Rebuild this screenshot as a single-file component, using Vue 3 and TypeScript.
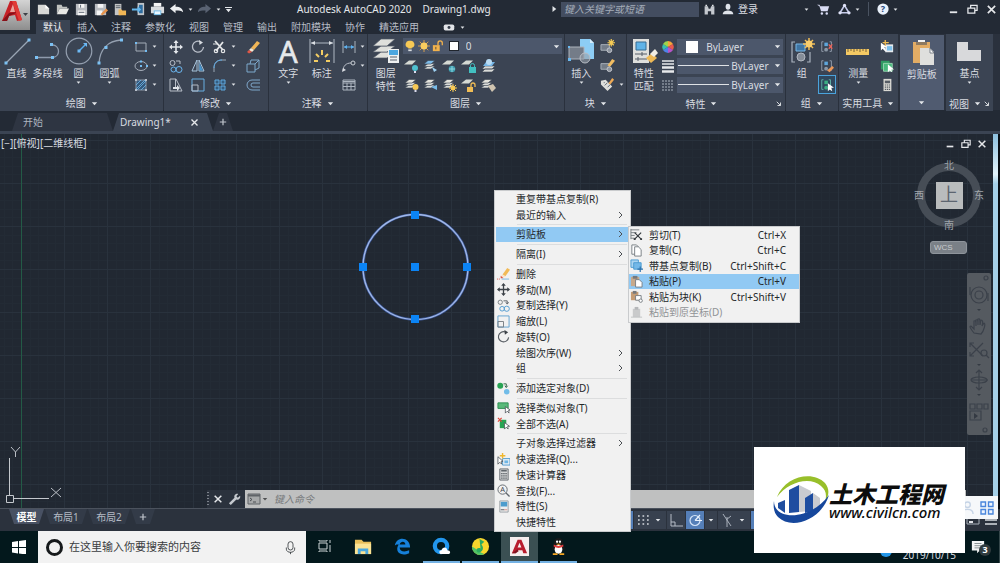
<script setup lang="ts">
import { h, ref } from 'vue'

interface Tool { icon: string; label: string; more?: boolean; on?: boolean }
interface MenuItem { label?: string; icon?: string; keys?: string; sub?: boolean; active?: boolean; off?: boolean; sep?: boolean }

const stack = (top: string, x = 0) => `<g fill="#d9dbd8" stroke="#3b4453" stroke-width=".6"><path d="M${1 + x} 11l4-3h7l-4 3z"/><path d="M${1 + x} 8.500l4-3h7l-4 3z"/><path fill="${top}" d="M${1 + x} 6l4-3.500h7l-4 3.500z"/></g>`
const single = '<path d="M0 6.500l5-4h7l-4 4z" fill="#d5d9d3"/>'
const burst = '<g stroke="#f6cb55" stroke-width="1.300"><path d="M12 0v8M8 4h8M9.300 1.300l5.400 5.400M14.700 1.300L9.300 6.700"/></g>'
const frame = '<path d="M1 6h9v6H1z" fill="#737c88" stroke="#aab1bb"/><circle cx="10" cy="12" r="2.500" fill="#8d949e" stroke="#c5c9cf"/>'

const icons: Record<string, [number, string]> = {
  down: [8, '<path d="M1 2.500h6L4 6z" fill="#e3e6ea"/>'],
  new: [16, '<path d="M2 3h8l4 4v6H2z" fill="#d8d8d6"/><path d="M10 3v4h4" fill="#fff"/>'],
  open: [16, '<path d="M2 13V3h5l1 2h5v2H5z" fill="#bfc1bf"/><path d="M5 7h10l-3 6H2z" fill="#e8e8e5"/>'],
  save: [16, '<path d="M2 2h12v12H2z" fill="#b9bcc1"/><path d="M5 2h6v4H5zM4 9h8v5H4z" fill="#f5f5f5"/><path d="M5 11h6M7 3v3" stroke="#59616e"/>'],
  saveas: [16, '<path d="M2 2h12v12H2z" fill="#b9bcc1"/><path d="M5 2h6v4H5zM4 9h6v5H4z" fill="#f5f5f5"/><path d="M8 13l6-6 2 2-6 5z" fill="#e6924a"/>'],
  webopen: [16, '<path d="M3 2h7v12H3z" fill="#c3c5c6"/><path d="M4 4h5M4 6h5" stroke="#596069"/><path d="M7 8h3l1 1h4v5H7z" fill="#f0b656"/>'],
  websave: [16, '<path d="M7 1h7v13H7z" fill="#bfc4c9"/><path d="M8.500 3h4v9h-4z" fill="#2f6da0"/><path d="M1 7h6V4.500L11 8l-4 3.500V9H1z" fill="#65b7ee"/>'],
  print: [16, '<path d="M4 1h8v4H4z" fill="#f4f4f4"/><path d="M1 5h14v7H1z" fill="#d9dcdf"/><path d="M4 9h8v5H4z" fill="#6eb8e6"/><path d="M5 10h6v3H5z" fill="#e8f6ff"/>'],
  undo: [16, '<path d="M1 7l6-5v3c5 0 8 2 8 6-2-2-4-2-8-2v3z" fill="#eceef0"/>'],
  redo: [16, '<path d="M15 7L9 2v3c-5 0-8 2-8 6 2-2 4-2 8-2v3z" fill="#596272"/>'],
  dropbar: [8, '<path d="M0 1h8v1.300H0zM1 3.500h6L4 7z" fill="#e3e6ea"/>'],
  right: [8, '<path d="M2 0l5 4-5 4z" fill="#dfe2e6"/>'],
  find: [16, '<path d="M2 4h4l1 3h2l1-3h4v10h-4v-4H6v4H2z" fill="#c4c8ce"/><path d="M3 2h2v2H3zM11 2h2v2h-2z" fill="#e3e5e8"/>'],
  user: [16, '<ellipse cx="8" cy="5" rx="3.200" ry="4" fill="#dfe3ea"/><path d="M1 15c0-4 4-5 7-5s7 1 7 5z" fill="#dfe3ea"/>'],
  cart: [16, '<path d="M0 2h3l1 2h11l-2 6H5L3 4" fill="#d9dcf4"/><circle cx="6" cy="13" r="1.500" fill="#d9dcf4"/><circle cx="12" cy="13" r="1.500" fill="#d9dcf4"/>'],
  share: [16, '<path d="M8 3L2.500 12h11z" fill="none" stroke="#c6cbea" stroke-width="2"/><g fill="#dfe2f7"><circle cx="8" cy="3" r="2"/><circle cx="2.500" cy="12" r="2"/><circle cx="13.500" cy="12" r="2"/></g>'],
  help: [16, '<circle cx="8" cy="8" r="7.500" fill="#e9f1fb"/><text x="8" y="12" font-size="12" font-weight="700" fill="#22467c" text-anchor="middle" font-family="Noto Sans">?</text>'],
  min: [12, '<path d="M2 9h8" stroke="#e6e8eb" stroke-width="2"/>'],
  restore: [12, '<path d="M4 4V1.500h7V7H8.500M1 4.500h7.500V10H1z" fill="none" stroke="#e6e8eb" stroke-width="1.400"/>'],
  close: [12, '<path d="M2 2l8 8M10 2l-8 8" stroke="#e6e8eb" stroke-width="1.800"/>'],
  camera: [16, '<rect x="2" y="5" width="12" height="7" rx="2" fill="#e2e4e8"/><circle cx="8" cy="8.500" r="1.700" fill="#333b48"/>'],
  line: [28, '<path d="M3 26L26 3" stroke="#9aa5b4" stroke-width="1.300"/><path d="M1.500 24.500h3v3h-3zM24.500 1.500h3v3h-3z" fill="#7cc1f3"/>'],
  pline: [28, '<path d="M2 20.500h17a6.300 6.300 0 0 0 0-12.500h-1" fill="none" stroke="#8e9aac" stroke-width="1.300"/><path d="M1 19h3v3H1zM17 19h3v3h-3zM16 6h3v3h-3z" fill="#7cc1f3"/>'],
  circle: [28, '<circle cx="14" cy="14" r="12.800" fill="none" stroke="#95a0b0" stroke-width="1.200"/><path d="M14 14l7-7" stroke="#58aef0" stroke-width="1.400"/><path d="M12.500 12.500h3v3h-3zM18 6h4v4z" fill="#6ebaf5"/>'],
  arc: [28, '<path d="M3 26C4 12 12 4 25 3" fill="none" stroke="#95a0b0" stroke-width="1.300"/><path d="M1.500 24.500h3v3h-3zM8.500 9h3v3h-3zM24 1.500h3v3h-3z" fill="#7cc1f3"/>'],
  rect: [14, '<path d="M2 3h10v8H2z" fill="none" stroke="#a5adb9"/><path d="M1 2h2v2H1zM11 10h2v2h-2z" fill="#75bdf2"/>'],
  ellipse: [14, '<ellipse cx="7" cy="7" rx="6" ry="4.500" fill="none" stroke="#a5adb9"/><path d="M6 6h2v2H6zM6 1.500h2v2H6zM12 6h2v2h-2z" fill="#75bdf2"/>'],
  hatch: [14, '<path d="M2 2h10v10H2z" fill="#35597c" stroke="#8d98a8"/><path d="M2 7l5-5M2 11l9-9M3 12l9-9M7 12l5-5" stroke="#70b7ea" stroke-width=".8"/><path d="M1 1h2v2H1zM11 1h2v2h-2zM1 11h2v2H1zM11 11h2v2h-2z" fill="#b7bec9"/>'],
  move: [14, '<path d="M7 1v12M1 7h12" stroke="#e4e7eb" stroke-width="1.600"/><path d="M7 0l2.500 3h-5zM7 14l2.500-3h-5zM0 7l3-2.500v5zM14 7l-3-2.500v5z" fill="#e4e7eb"/>'],
  rotate: [14, '<path d="M9 1.500A5.500 5.500 0 1 0 12.500 7" fill="none" stroke="#b8bec8" stroke-width="1.300"/><path d="M8 0l4 2.500L8.500 5z" fill="#d8dce1"/>'],
  trim: [14, '<path d="M2 1l8 9M10 2l-7 9" stroke="#e4e6e8" stroke-width="1.800"/><circle cx="3" cy="11" r="1.700" fill="none" stroke="#e4e6e8" stroke-width="1.200"/><circle cx="10" cy="11" r="1.700" fill="none" stroke="#e4e6e8" stroke-width="1.200"/><path d="M0 4h5" stroke="#e4e6e8"/>'],
  erase: [14, '<path d="M5 8l6-7 3 2-6 7z" fill="#f0b657"/><path d="M5 8l3 2-2 2-3-2z" fill="#f2e9d6"/><path d="M3 10l3 2-3 1.500L1 12z" fill="#e05747"/>'],
  copy: [14, '<g fill="none"><circle cx="3.500" cy="4" r="2.500" stroke="#b8bec8"/><circle cx="4.500" cy="10.500" r="2.500" stroke="#6ab5ee"/><circle cx="10" cy="10.500" r="3" stroke="#6ab5ee"/><path d="M7 2h4v3" stroke="#b8bec8"/></g>'],
  mirror: [14, '<path d="M6 1v11H1zM8 1v11h5z" fill="none" stroke="#a9c5dd"/><path d="M8.500 4v7.500H12z" fill="#4595d0"/>'],
  fillet: [14, '<path d="M1 13V9c0-5 3-8 8-8h4" fill="none" stroke="#9aa7b6"/><path d="M1 9c0-5 3-8 8-8" fill="none" stroke="#57a8e5"/>'],
  box: [14, '<path d="M1 5h8v8H1zM4 5l1-4h8v8l-4 2M9 5l4-4" fill="none" stroke="#7da8cc"/>'],
  stretch: [14, '<path d="M1 13V1h6l6 12zM6.500 1v8" fill="none" stroke="#b8bec8"/><path d="M4 9h4V7l3 3-3 3v-2H4z" fill="#dfe3e8"/>'],
  scale: [14, '<path d="M1 1h12v12H1z" fill="none" stroke="#68aee2"/><path d="M1 7h6v6H1z" fill="none" stroke="#b3bac5"/>'],
  array: [14, '<path d="M2 2h4v4H2zM8 2h4v4H8zM2 8h4v4H2zM8 8h4v4H8z" fill="#355d80" stroke="#61a9df"/>'],
  offset: [14, '<path d="M14 2H6a5 5 0 0 0 0 10h8M14 5H7a2 2 0 0 0 0 4h7" fill="none" stroke="#7fa7cb"/>'],
  text: [28, '<text x="14" y="26" font-family="Noto Sans" font-size="30" fill="#e6e9ec" stroke="#e6e9ec" stroke-width=".6" text-anchor="middle">A</text>'],
  dim: [28, '<path d="M2 2v24M26 2v24M3 6h22" stroke="#b0b8c4" fill="none"/><path d="M3 6l4-2v4zM25 6l-4-2v4z" fill="#dce0e5"/><path d="M6 24h4M18 24h4M8 17l3 3M20 17l-3 3M14 13v5" stroke="#f3cd63" stroke-width="2"/>'],
  dimlin: [14, '<path d="M1 1v12M13 1v12" stroke="#a9b1bc"/><path d="M2 7h10" stroke="#5fb2f0"/><path d="M2 7l3-2v4zM12 7L9 5v4z" fill="#5fb2f0"/>'],
  leader: [14, '<path d="M1 12c0-5 3-8 8-8" fill="none" stroke="#b8bec8"/><circle cx="11" cy="4" r="2" fill="none" stroke="#c9ced5"/><path d="M0 13l1-4 3 2z" fill="#dadde2"/>'],
  table: [14, '<path d="M1 2h12v10H1z" fill="none" stroke="#adb5c0"/><path d="M1 5h12M1 8.500h12M5 5v7M9 5v7M1 3.500h12" stroke="#adb5c0"/>'],
  layers: [28, '<g fill="#dfe0dc" stroke="#4d5665" stroke-width=".7"><path d="M1 21l8-6h14l-8 6z"/><path d="M1 15l8-6h14l-8 6z"/><path d="M1 9l8-7h14l-8 7z"/></g><path d="M16 12h11v14H16z" fill="#eef0f0"/><path d="M17 13h9v5h-9z" fill="#4ba6df"/><path d="M18 20h7M18 23h7" stroke="#59616d"/>'],
  bulb: [14, '<path d="M7 1a4 4 0 0 0-2 8v1h4V9a4 4 0 0 0-2-8z" fill="#f7c955"/><path d="M5 11h4v2H5z" fill="#d9dce0"/>'],
  sun: [14, '<path d="M7 0v14M0 7h14M2 2l10 10M12 2L2 12" stroke="#e9a84a"/><circle cx="7" cy="7" r="4" fill="#f9cd5f"/>'],
  lock: [14, '<path d="M1 6h8v7H1z" fill="#f2b24d"/><path d="M7 6V3.500a2.500 2.500 0 0 1 5 0V6" fill="none" stroke="#f2b24d" stroke-width="1.500"/><path d="M4.500 8v3" stroke="#4a4334"/>'],
  la1: [16, single + '<circle cx="11" cy="10" r="3" fill="#4ec0cf"/><path d="M10 13h2v2h-2z" fill="#dde"/>'],
  la2: [16, stack('#7dbbe8') + '<path d="M9 9l5 3-3 2z" fill="#9fd2f3"/>'],
  la3: [16, single + '<circle cx="10" cy="11" r="3.300" fill="#3f9eb0"/><path d="M7 11h6M10 8v6" stroke="#8fd4de"/>'],
  la4: [16, single + '<path d="M8 9h7v6H8z" fill="#42c0c1"/><path d="M9.500 9V7.500a2 2 0 0 1 4 0V9" fill="none" stroke="#42c0c1"/>'],
  la5: [16, '<path d="M2 14l3-3h10l-3 3zM2 11l3-3h10l-3 3z" fill="#d9dbd8" stroke="#3b4453" stroke-width=".6"/><path d="M3 8l3-4h9l-3 4z" fill="#74b5e5"/><circle cx="9" cy="4" r="3" fill="#b9dcf4"/>'],
  lb1: [16, stack('#e4e3dc') + '<circle cx="11.500" cy="10" r="3" fill="#f7c955"/><path d="M10.500 13h2v2h-2z" fill="#dde"/>'],
  lb2: [16, stack('#e4e3dc') + '<path d="M8 10l6-2v5z" fill="#78bbe8"/>'],
  lb3: [16, stack('#e4e3dc') + '<path d="M11 7v8M7 11h8M8 8l6 6M14 8l-6 6" stroke="#f7c955"/><circle cx="11" cy="11" r="2.300" fill="#f7c955"/>'],
  lb4: [16, single + '<path d="M6 10h6v5H6z" fill="#f0bd55"/><path d="M10 10V8a2 2 0 0 1 4 0v2" fill="none" stroke="#f0bd55" stroke-width="1.300"/>'],
  lb5: [16, stack('#e4e3dc') + '<path d="M8 9l5-2 3 4-4 4z" fill="#cfc4b0"/>'],
  insert: [28, '<path d="M13 2h10l4 4v16H13z" fill="#8dcdf5"/><path d="M23 2v4h4" fill="#d7eefc"/><path d="M2 10h15v12H2z" fill="#747c88" stroke="#adb3bc"/><circle cx="18" cy="21" r="5" fill="#98a0aa" fill-opacity=".6" stroke="#b9bec6"/><path d="M1 21h3v3H1zM1 9h2v2H1z" fill="#6bb9ef"/>'],
  blk1: [16, frame + burst],
  blk2: [16, frame + '<path d="M8 8l5-7 3 2-5 6z" fill="#f1bd62"/>'],
  blk3: [16, '<path d="M1 4l5-1 7 7-5 5-7-7z" fill="#dedfdc"/><path d="M4 6h1M5 9l3-3M8 11l3-3" stroke="#59616e"/><path d="M9 7l4-6 2 2-4 5z" fill="#eeaa56"/>'],
  match: [28, '<path d="M3 2h16v24H3z" fill="#dedfdd"/><path d="M6 5h10v8H6z" fill="#5fb3e8" stroke="#376c93"/><path d="M5 17h12M5 22h12M12 15v4M8 20v4" stroke="#555d69"/><path d="M16 21l6-5 5 5-6 5z" fill="#eeb956"/><path d="M20 17l5-5 3 4-4 4z" fill="#f1eee4"/>'],
  wheel: [14, '<g><path d="M7 7V1a6 6 0 0 1 5 3z" fill="#f5a33a"/><path d="M7 7l5-3a6 6 0 0 1 0 6z" fill="#e8584e"/><path d="M7 7l5 3a6 6 0 0 1-5 3z" fill="#b754c8"/><path d="M7 7v6a6 6 0 0 1-5-3z" fill="#4f82e8"/><path d="M7 7l-5 3a6 6 0 0 1 0-6z" fill="#36bfae"/><path d="M7 7L2 4a6 6 0 0 1 5-3z" fill="#9dd44c"/></g>'],
  weights: [14, '<path d="M1 2h12M1 5h12" stroke="#e6e8ea" stroke-width="1.300"/><path d="M1 8.500h12M1 12.500h12" stroke="#e6e8ea" stroke-width="2.300"/>'],
  dashes: [14, '<path d="M1 3h12M1 6h12M1 9h12M1 12h12" stroke="#aeb6c1" stroke-dasharray="2 1"/>'],
  group: [28, '<path d="M7 5H4v20h3M19 25h3V15" fill="none" stroke="#aab2be" stroke-width="1.200"/><path d="M8 7h9v7H8z" fill="#3f75a4" stroke="#79b7e5"/><circle cx="13" cy="20" r="4" fill="#858d98" stroke="#b2b8c1"/><path d="M21 1v12M15 7h12M17 3l8 8M25 3l-8 8" stroke="#f2bd55" stroke-width="1.500"/><circle cx="21" cy="7" r="3.400" fill="#f9cd6b"/>'],
  gr1: [16, '<path d="M4 2H2v11h2M11 2h2v11h-2" fill="none" stroke="#99a4b2"/><path d="M5 3h4v4H5z" fill="#5ea6db"/><circle cx="7" cy="11" r="2.200" fill="#8c98a6"/><path d="M10 5l4 5M14 5l-4 5" stroke="#ef6257" stroke-width="1.400"/>'],
  gr2: [16, '<path d="M4 2H2v11h2M11 2h2v11h-2" fill="none" stroke="#99a4b2"/><path d="M5 3h4v4H5z" fill="#5ea6db"/><circle cx="7" cy="11" r="2.200" fill="#8c98a6"/><path d="M8 13l6-5 2 2-5 5z" fill="#eb9858"/>'],
  gr3: [16, '<path d="M4 2H2v11h2M10 2h2v11h-2" fill="none" stroke="#62b7a9"/><path d="M5 3h4v4H5z" fill="#3cae83"/><circle cx="7" cy="11" r="2.200" fill="#3cae83"/><path d="M9 6v9l2-2 3 2-1-4h3z" fill="#fff"/>'],
  measure: [28, '<path d="M2 12h23v6H2z" fill="#f4c963"/><path d="M4 12v3M7 12v2M10 12v3M13 12v2M16 12v3M19 12v2M22 12v3" stroke="#78633a"/>'],
  ut1: [16, '<path d="M6 5h9v9H6z" fill="#e6eaee"/><path d="M8 7h6v5H8z" fill="#7cc0ec"/><path d="M6 0v7M3 3h7" stroke="#f2bd55" stroke-width="1.500"/><path d="M1 3v9l2-2 3 3 1-1-2-4h3z" fill="#fff"/>'],
  ut2: [16, '<path d="M1 2h10v10H1z" fill="#319a63"/><path d="M4 5h10v9H4z" fill="#48b87b" stroke="#9bd7b5"/><path d="M9 6v9l2-2 3 2-1-3h3z" fill="#fff"/>'],
  calc: [16, '<path d="M4 1h9v14H4z" fill="#d9d8d3"/><path d="M5.500 3h6v3h-6z" fill="#555c65"/><path d="M5.500 8h6M5.500 10.500h6M5.500 13h6" stroke="#555c65" stroke-width="1.400" stroke-dasharray="1.500 .8"/>'],
  clipboard: [28, '<path d="M5 4h17v21H5z" fill="#e2ac65"/><path d="M10 2h7v4h-7z" fill="#f2f3f3"/><path d="M8 4h11v3H8z" fill="#8e7a61"/><path d="M12 10h10l4 4v13H12z" fill="#dfdfdd"/><path d="M22 10v5h4z" fill="#fff" stroke="#555d69" stroke-width=".7"/>'],
  base: [28, '<path d="M2 5h11v8h13v11H2z" fill="#d8d9db"/>'],
  corner: [8, '<path d="M1 1l5 5M6 2v4H2" fill="none" stroke="#d9dce0" stroke-width="1.300"/>'],
  plus: [10, '<path d="M5 1v8M1 5h8" stroke="#c1c6cd" stroke-width="1.500"/>'],
  wrench: [14, '<path d="M1 11l6-6c-1-3 2-5 4-4L9 3.500 10.500 5 13 3c1 3-2 5-4 4l-6 6z" fill="#c5c9ce"/>'],
  prompt: [14, '<path d="M1 2h12v10H1z" fill="#a7a9aa" stroke="#606468"/><path d="M1 3.500h12" stroke="#606468" stroke-width="2"/><path d="M3 6l2 1.500L3 9M6 10h3" fill="none" stroke="#4a4e52"/>'],
  grid: [14, '<path d="M2 3h11M2 7h11M2 11h11" stroke="#d5d9df" stroke-width="1.700" stroke-dasharray="1.700 2.800"/>'],
  ortho: [14, '<path d="M2 1v12h12M2 9h4v4" fill="none" stroke="#b6bdc7"/>'],
  polar: [14, '<circle cx="7" cy="7.500" r="5" fill="none" stroke="#d6e5f8" stroke-width="1.200"/><path d="M7 7.500h7M7 7.500L12 2" stroke="#e9f2fd" stroke-width="1.200"/>'],
  iso: [14, '<path d="M3 1l8 12M7 4v10M11 3L6 7" stroke="#a9b1bc" fill="none"/>'],
  snap: [14, '<path d="M3 12L12 2v10z" fill="#a3c8f0"/>'],
  screen: [14, '<path d="M1 2h12v9H1z" fill="none" stroke="#aab1bb"/><path d="M3 9h4" stroke="#dfe2e6" stroke-width="2"/>'],
  burger: [14, '<path d="M1 3h12M1 7h12M1 11h12" stroke="#d8dbe0" stroke-width="1.300"/>'],
  mErase: [14, '<path d="M6 8l5-7 3 2-5 7z" fill="#f1ba57"/><path d="M6 8l3 2-2 1.500-3-1.500z" fill="#f7e1c8"/><path d="M4 9.500L7 12H4z" fill="#de4f3f"/><path d="M0 13h3" stroke="#de4f3f" stroke-dasharray="1 1"/><path d="M5 13h8" stroke="#77b3e2"/>'],
  mMove: [14, '<path d="M7 1v12M1 7h12" stroke="#3c4248" stroke-width="1.400"/><path d="M7 0l2.500 3h-5zM7 14l2.500-3h-5zM0 7l3-2.500v5zM14 7l-3-2.500v5z" fill="#3c4248"/>'],
  mCopy: [14, '<g fill="none"><circle cx="3.500" cy="3.500" r="2.300" stroke="#777d83"/><circle cx="5.500" cy="10.500" r="2.500" stroke="#4f9bd0"/><circle cx="10.500" cy="10.500" r="2.800" stroke="#4f9bd0"/><path d="M7 2h4v3M9.500 3.500L11 5.500l1.500-2" stroke="#555b61"/></g>'],
  mScale: [14, '<path d="M1 1h12v12H1z" fill="none" stroke="#60a1cf"/><path d="M1 7h6v6H1z" fill="none" stroke="#777d83"/>'],
  mRotate: [14, '<path d="M8.500 2A5.500 5.500 0 1 0 12.500 8" fill="none" stroke="#555b61" stroke-width="1.200"/><path d="M8 0l4 2.500L8.500 5z" fill="#3c4248"/>'],
  mAdd: [14, '<circle cx="3.500" cy="4" r="3.200" fill="#27a353"/><circle cx="10.500" cy="10.500" r="3" fill="#71bce8"/><path d="M7 2h3v3M8.500 4L10 6l1.500-2" fill="none" stroke="#2b5f40"/>'],
  mSimilar: [14, '<path d="M1 2h11v6H1z" fill="#58b979" stroke="#2c8c51"/><path d="M9 6v7l2-2 2 2-.500-3h2z" fill="#fff" stroke="#444a50" stroke-width=".8"/>'],
  mNone: [14, '<path d="M3 3h7v9H3z" fill="#27a353"/><path d="M1 1l4 4M5 1L1 5" stroke="#e0463b" stroke-width="1.300"/><path d="M8 6v7l2-2 2 2-.500-3h2z" fill="#fff" stroke="#444a50" stroke-width=".8"/>'],
  mQuick: [14, '<path d="M6 6h8v7H6z" fill="#e7eef4" stroke="#4f9bd0"/><path d="M8 8h4v3H8z" fill="#6db6e5"/><path d="M6 0v6M3 3h6" stroke="#f0b72d" stroke-width="1.500"/><path d="M1 4v8l2-2 2 2-.500-3h2z" fill="#fff" stroke="#444a50" stroke-width=".8"/>'],
  mCalc: [14, '<path d="M3 1h9v12H3z" fill="#d5d7d8" stroke="#64696e"/><path d="M4.500 3h6" stroke="#555b61" stroke-width="1.500"/><path d="M4.500 6h6M4.500 8.500h6M4.500 11h6" stroke="#555b61" stroke-width="1.300" stroke-dasharray="1.500 .75"/>'],
  mFind: [14, '<circle cx="6" cy="6" r="5" fill="none" stroke="#61676d"/><path d="M9.500 9.500l4 4" stroke="#61676d" stroke-width="1.400"/><text x="6" y="9" font-size="8" font-family="Noto Sans" text-anchor="middle" fill="#444a50">A</text>'],
  mProps: [14, '<path d="M3 1h9v12H3z" fill="#eceeef" stroke="#9ba0a5"/><path d="M4 2h7v5H4z" fill="#4c9ccd"/><path d="M4 10.500h4" stroke="#555b61"/><path d="M8 10.500h3" stroke="#e38b7f"/>'],
  sCut: [14, '<path d="M1 2h9M1 5h6M1 8h4M1 11h4" stroke="#777d83"/><path d="M1 1v11" stroke="#777d83"/><path d="M5 5l7 7M12 5l-7 7" stroke="#33383d" stroke-width="1.200"/><path d="M4 11h2v2H4zM11 11h2v2h-2z" fill="#33383d"/>'],
  sCopy: [14, '<path d="M2 1h5l2 2v8H2z" fill="#fff" stroke="#777d83"/><path d="M5 3h4l3 3v7H5z" fill="#fff" stroke="#777d83"/>'],
  sBase: [14, '<path d="M1 1h8v8H1z" fill="#acd5f1" stroke="#4b9ad0"/><path d="M4 4h8v7H4z" fill="#73b8e8" stroke="#4b9ad0"/><path d="M11 8v6M8 11h6" stroke="#2d73ad" stroke-width="1.300"/>'],
  sPaste: [14, '<path d="M1 2h9v10H1z" fill="#c7a98b"/><path d="M3 1h5v3H3z" fill="#75797d"/><path d="M6 5h4l3 3v5H6z" fill="#fff" stroke="#777d83"/>'],
  sBlock: [14, '<path d="M1 2h8v9H1z" fill="#c59d76"/><path d="M3 1h4v3H3z" fill="#75797d"/><path d="M6 6h6v5H6z" fill="#fff" stroke="#777d83"/><circle cx="11.500" cy="11.500" r="1.800" fill="#fff" stroke="#777d83"/>'],
  sOrig: [14, '<path d="M3 3h8v9H3z" fill="#c9cacb"/><path d="M5 1h4v3H5z" fill="#b5b7b9"/><path d="M1 12h12" stroke="#c0c2c4"/>'],
  windows: [14, '<path d="M0 2l6-1v6H0zM7 1l7-1v7H7zM0 8h6v5.500l-6-1zM7 8h7v6.500l-7-1z" fill="#fff"/>'],
  mic: [18, '<rect x="6" y="2" width="6" height="10" rx="3" fill="none" stroke="#33373b"/><path d="M4 9v2c0 5 10 5 10 0V9M9 14.500V17" fill="none" stroke="#33373b"/>'],
  taskview: [16, '<path d="M2 5h8v6H2zM2 2v1h8V2M2 14v-1h8v1M13 2v3M13 7v7" fill="none" stroke="#cdd4d5"/>'],
  folder: [20, '<path d="M1 3h7l2 2h8v13H1z" fill="#e8bf5b"/><path d="M1 7h17v11H1z" fill="#fbe394"/><path d="M4 18v-6h11v6h-3v-3H7v3z" fill="#4aa8df"/>'],
  edge: [20, '<path d="M2 9c1-10 16-10 16 2H7c0 5 6 5 10 3v3C9 21 1 16 6 8 4 8 3 8 2 9zM7 8h6c0-4-5-4-6 0z" fill="#1680da"/>'],
  qqb: [20, '<circle cx="9.500" cy="9.500" r="6.500" fill="none" stroke="#2296ed" stroke-width="4.500"/><path d="M10 18c-3 0-3-4 0-4 1-4 6-4 6 0 4 0 4 4 1 4z" fill="#fff"/>'],
  music: [20, '<circle cx="10" cy="10" r="9" fill="#f8d62c"/><path d="M1 10a9 9 0 0 0 13 8c-5-2-9-6-13-8z" fill="#52c466"/><path d="M9 2l5 3-3 3c5 6-3 11-5 7-1-3 2-4 4-3z" fill="#2cab60"/>'],
  acad: [20, '<path d="M0 0h20v20H0z" fill="#f5eeee"/><path d="M2 17L8 3h4l6 14h-4l-1-3H8l-2 3zM8 11h4l-2-5z" fill="#b81c2d"/><path d="M2 17l6-4 1 2-3 2z" fill="#7f1421"/>'],
  qq: [20, '<path d="M10 1c5 0 5 5 5 7 2 3 2 6 1 6l-1-1c0 5-10 5-10 0l-1 1c-1 0-1-3 1-6 0-2 0-7 5-7z" fill="#17191b"/><ellipse cx="10" cy="13" rx="4" ry="4.500" fill="#fff"/><path d="M5 8c3 2 7 2 10 0v2c-3 2-7 2-10 0z" fill="#e33c3c"/><circle cx="8.500" cy="5" r="1.200" fill="#fff"/><circle cx="11.500" cy="5" r="1.200" fill="#fff"/><path d="M7 7h6l-3 1.500zM4 17h5v2H4zM11 17h5v2h-5z" fill="#f5a623"/>'],
  note: [16, '<path d="M1 1h14v11h-5l-3 3v-3H1z" fill="#f3f5f5"/><path d="M4 4h8M4 6.500h8M4 9h6" stroke="#7c8688"/>'],
  apps: [14, '<path d="M1 1h4.500v4.500H1zM8.500 1H13v4.500H8.500zM1 8.500h4.500V13H1zM8.500 8.500H13V13H8.500z" fill="#eef5ff" stroke="#4a86dc" stroke-width="1.400"/>'],
  person: [14, '<circle cx="7" cy="4" r="3" fill="none" stroke="#c6d4e6" stroke-width="1.500"/><path d="M1 14c0-4 3-5 6-5s6 1 6 5" fill="none" stroke="#c6d4e6" stroke-width="1.500"/>'],
}

const Icon = (props: { name: string; size?: number }) => {
  const [box, body] = icons[props.name]
  const side = props.size ?? box
  return h('svg', { viewBox: `0 0 ${box} ${box}`, width: side, height: side, 'aria-hidden': 'true', innerHTML: body })
}

const quick: Tool[] = [
  { icon: 'new', label: '新建' }, { icon: 'open', label: '打开' }, { icon: 'save', label: '保存' },
  { icon: 'saveas', label: '另存为' }, { icon: 'webopen', label: '从 Web 打开' }, { icon: 'websave', label: '保存到 Web' },
  { icon: 'print', label: '打印' }, { icon: 'undo', label: '放弃', more: true }, { icon: 'redo', label: '重做', more: true },
]
const ribbonTabs = ['默认', '插入', '注释', '参数化', '视图', '管理', '输出', '附加模块', '协作', '精选应用']
const activeTab = ref('默认')

const drawBig: Tool[] = [
  { icon: 'line', label: '直线' }, { icon: 'pline', label: '多段线' },
  { icon: 'circle', label: '圆', more: true }, { icon: 'arc', label: '圆弧', more: true },
]
const drawSmall: Tool[] = [
  { icon: 'rect', label: '矩形', more: true }, { icon: 'ellipse', label: '椭圆', more: true }, { icon: 'hatch', label: '图案填充', more: true },
]
const modify: Tool[] = [
  { icon: 'move', label: '移动' }, { icon: 'rotate', label: '旋转' }, { icon: 'trim', label: '修剪', more: true }, { icon: 'erase', label: '删除' },
  { icon: 'copy', label: '复制' }, { icon: 'mirror', label: '镜像' }, { icon: 'fillet', label: '圆角', more: true }, { icon: 'box', label: '分解' },
  { icon: 'stretch', label: '拉伸' }, { icon: 'scale', label: '缩放' }, { icon: 'array', label: '阵列', more: true }, { icon: 'offset', label: '偏移' },
]
const annotate: Tool[] = [
  { icon: 'dimlin', label: '线性', more: true }, { icon: 'leader', label: '引线', more: true }, { icon: 'table', label: '表格' },
]
const layerTools: Tool[] = [
  { icon: 'la1', label: '关' }, { icon: 'la2', label: '隔离' }, { icon: 'la3', label: '冻结' }, { icon: 'la4', label: '锁定' }, { icon: 'la5', label: '置为当前' },
  { icon: 'lb1', label: '打开所有图层' }, { icon: 'lb2', label: '取消隔离' }, { icon: 'lb3', label: '解冻所有图层' }, { icon: 'lb4', label: '解锁' }, { icon: 'lb5', label: '匹配图层' },
]
const blockTools: Tool[] = [{ icon: 'blk1', label: '创建' }, { icon: 'blk2', label: '编辑' }, { icon: 'blk3', label: '编辑属性', more: true }]
const groupTools: Tool[] = [{ icon: 'gr1', label: '解除编组' }, { icon: 'gr2', label: '组编辑' }, { icon: 'gr3', label: '启用组选择', on: true }]
const utilTools: Tool[] = [{ icon: 'ut1', label: '快速选择' }, { icon: 'ut2', label: '全部选择' }, { icon: 'calc', label: '快速计算器' }]

const contextMenu: MenuItem[] = [
  { label: '重复带基点复制(R)' }, { label: '最近的输入', sub: true }, { sep: true },
  { label: '剪贴板', sub: true, active: true }, { sep: true },
  { label: '隔离(I)', sub: true }, { sep: true },
  { label: '删除', icon: 'mErase' }, { label: '移动(M)', icon: 'mMove' }, { label: '复制选择(Y)', icon: 'mCopy' },
  { label: '缩放(L)', icon: 'mScale' }, { label: '旋转(O)', icon: 'mRotate' }, { label: '绘图次序(W)', sub: true }, { label: '组', sub: true }, { sep: true },
  { label: '添加选定对象(D)', icon: 'mAdd' }, { sep: true },
  { label: '选择类似对象(T)', icon: 'mSimilar' }, { label: '全部不选(A)', icon: 'mNone' }, { sep: true },
  { label: '子对象选择过滤器', sub: true }, { label: '快速选择(Q)...', icon: 'mQuick' }, { label: '快速计算器', icon: 'mCalc' },
  { label: '查找(F)...', icon: 'mFind' }, { label: '特性(S)', icon: 'mProps' }, { label: '快捷特性' },
]
const clipMenu: MenuItem[] = [
  { label: '剪切(T)', icon: 'sCut', keys: 'Ctrl+X' }, { label: '复制(C)', icon: 'sCopy', keys: 'Ctrl+C' },
  { label: '带基点复制(B)', icon: 'sBase', keys: 'Ctrl+Shift+C' }, { label: '粘贴(P)', icon: 'sPaste', keys: 'Ctrl+V', active: true },
  { label: '粘贴为块(K)', icon: 'sBlock', keys: 'Ctrl+Shift+V' }, { label: '粘贴到原坐标(D)', icon: 'sOrig', off: true },
]
const grips = [[415, 81], [363, 133], [415, 133], [467, 133], [415, 185]]
const apps = [
  { icon: 'taskview', label: '任务视图', size: 16 }, { icon: 'folder', label: '文件资源管理器' }, { icon: 'edge', label: 'Edge' },
  { icon: 'qqb', label: 'QQ浏览器', open: true }, { icon: 'music', label: 'QQ音乐', open: true },
  { icon: 'acad', label: 'AutoCAD', open: true, on: true }, { icon: 'qq', label: 'QQ', open: true },
]
</script>

<template>
  <div class="app">
    <header class="head">
      <button class="logo" aria-label="应用程序菜单">
        <svg viewBox="0 0 30 30" width="30" height="30" aria-hidden="true">
          <path d="M2 21L10 1h6l6 19-5 1-2-6-6 1-2 5z" fill="#c62127" />
          <path d="M10 12l3-8 2 8z" fill="#e9a59d" />
          <path d="M2 21l7-8 9-1-9 4-2 5z" fill="#861119" />
          <path d="M12 1h4l6 19-3 1z" fill="#e13b36" />
          <path d="M23 13h5l-2.500 3z" fill="#3c4046" />
        </svg>
      </button>
      <div class="headmain">
        <div class="titlebar">
          <div class="quick">
            <template v-for="t in quick" :key="t.icon">
              <button :aria-label="t.label"><Icon :name="t.icon" :size="15" /></button>
              <Icon v-if="t.more" class="tiny" name="down" :size="5" />
            </template>
            <Icon name="dropbar" :size="7" />
          </div>
          <div class="title"><span>Autodesk AutoCAD 2020</span><span>Drawing1.dwg</span></div>
          <div class="finder">
            <Icon name="right" :size="6" />
            <input aria-label="搜索" placeholder="键入关键字或短语">
          </div>
          <button aria-label="查找"><Icon name="find" :size="13" /></button>
          <button class="login"><Icon name="user" :size="12" />登录</button>
          <div class="services">
            <Icon name="down" :size="5" />
            <button aria-label="商店"><Icon name="cart" :size="13" /></button>
            <button class="pair" aria-label="共享"><Icon name="share" :size="13" /><Icon name="down" :size="5" /></button>
            <i></i>
            <button class="pair" aria-label="帮助"><Icon name="help" :size="12" /><Icon name="down" :size="5" /></button>
          </div>
          <div class="wincontrols">
            <button aria-label="最小化"><Icon name="min" :size="11" /></button>
            <button aria-label="还原"><Icon name="restore" :size="11" /></button>
            <button aria-label="关闭"><Icon name="close" :size="11" /></button>
          </div>
        </div>
        <nav class="tabs">
          <button v-for="t in ribbonTabs" :key="t" :class="{ on: t === activeTab }" @click="activeTab = t">{{ t }}</button>
          <button class="pair" aria-label="显示选项"><Icon name="camera" :size="14" /><Icon name="down" :size="5" /></button>
        </nav>
      </div>
    </header>

    <section class="ribbon">
      <div class="panel">
        <div class="body">
          <button v-for="t in drawBig" :key="t.icon" class="big"><Icon :name="t.icon" />{{ t.label }}<Icon v-if="t.more" name="down" :size="5" /></button>
          <div class="smalls one">
            <button v-for="t in drawSmall" :key="t.icon" :aria-label="t.label"><Icon :name="t.icon" /><Icon name="down" :size="5" /></button>
          </div>
        </div>
        <button class="name">绘图<Icon name="down" :size="7" /></button>
      </div>
      <div class="panel">
        <div class="body">
          <div class="smalls four">
            <button v-for="t in modify" :key="t.icon" :aria-label="t.label"><Icon :name="t.icon" /><Icon v-if="t.more" name="down" :size="5" /></button>
          </div>
        </div>
        <button class="name">修改<Icon name="down" :size="7" /></button>
      </div>
      <div class="panel">
        <div class="body">
          <button class="big wide"><Icon name="text" />文字<Icon name="down" :size="5" /></button>
          <button class="big"><Icon name="dim" />标注</button>
          <div class="smalls one">
            <button v-for="t in annotate" :key="t.icon" :aria-label="t.label"><Icon :name="t.icon" /><Icon v-if="t.more" name="down" :size="5" /></button>
          </div>
        </div>
        <button class="name">注释<Icon name="down" :size="7" /></button>
      </div>
      <div class="panel">
        <div class="body">
          <button class="big layer"><Icon name="layers" />图层<br>特性</button>
          <div class="layerside">
            <div class="combo">
              <Icon name="bulb" :size="12" /><Icon name="sun" :size="12" /><Icon name="lock" :size="12" /><i class="swatch"></i>
              <select aria-label="图层"><option>0</option></select><Icon name="down" :size="7" />
            </div>
            <div class="smalls five">
              <button v-for="t in layerTools" :key="t.icon" :aria-label="t.label"><Icon :name="t.icon" /></button>
            </div>
          </div>
        </div>
        <button class="name">图层<Icon name="down" :size="7" /></button>
      </div>
      <div class="panel">
        <div class="body">
          <button class="big"><Icon name="insert" />插入<Icon name="down" :size="5" /></button>
          <div class="smalls one block">
            <button v-for="t in blockTools" :key="t.icon" :aria-label="t.label"><Icon :name="t.icon" :size="15" /><Icon v-if="t.more" name="down" :size="5" /></button>
          </div>
        </div>
        <button class="name">块<Icon name="down" :size="7" /></button>
      </div>
      <div class="panel">
        <div class="body">
          <button class="big"><Icon name="match" />特性<br>匹配</button>
          <div class="props">
            <Icon name="wheel" />
            <div class="combo"><i class="swatch large"></i><select aria-label="对象颜色"><option>ByLayer</option></select><Icon name="down" :size="7" /></div>
            <Icon name="weights" />
            <div class="combo"><i class="rule"></i><select aria-label="线宽"><option>ByLayer</option></select><Icon name="down" :size="7" /></div>
            <Icon name="dashes" />
            <div class="combo"><i class="rule"></i><select aria-label="线型"><option>ByLayer</option></select><Icon name="down" :size="7" /></div>
          </div>
        </div>
        <div class="foot"><button class="name">特性<Icon name="down" :size="7" /></button><Icon name="corner" :size="6" /></div>
      </div>
      <div class="panel">
        <div class="body">
          <button class="big"><Icon name="group" />组</button>
          <div class="smalls one snug">
            <button v-for="t in groupTools" :key="t.icon" :class="{ on: t.on }" :aria-label="t.label"><Icon :name="t.icon" :size="14" /></button>
          </div>
        </div>
        <button class="name">组<Icon name="down" :size="7" /></button>
      </div>
      <div class="panel">
        <div class="body">
          <button class="big util"><Icon name="measure" />测量<Icon name="down" :size="5" /></button>
          <div class="smalls one snug">
            <button v-for="t in utilTools" :key="t.icon" :aria-label="t.label"><Icon :name="t.icon" :size="14" /></button>
          </div>
        </div>
        <button class="name">实用工具<Icon name="down" :size="7" /></button>
      </div>
      <div class="panel lit">
        <div class="body solo"><button class="big"><Icon name="clipboard" />剪贴板</button></div>
        <button class="name" aria-label="展开剪贴板"><Icon name="down" :size="7" /></button>
      </div>
      <div class="panel">
        <div class="body solo"><button class="big"><Icon name="base" />基点<Icon name="down" :size="5" /></button></div>
        <div class="foot"><button class="name">视图<Icon name="down" :size="7" /></button><Icon name="corner" :size="6" /></div>
      </div>
    </section>

    <nav class="files">
      <button class="file start">开始</button>
      <button class="file current">Drawing1*<Icon name="close" :size="9" /></button>
      <button class="file add" aria-label="新图形"><Icon name="plus" :size="8" /></button>
    </nav>

    <main class="work">
      <div class="canvas">
        <svg class="drawing" width="100%" height="100%" aria-hidden="true">
          <defs>
            <pattern id="cells" x="21" y="6" width="43" height="43" patternUnits="userSpaceOnUse">
              <path d="M9.500 0v43M17.500 0v43M26.500 0v43M34.500 0v43M0 9.500h43M0 17.500h43M0 26.500h43M0 34.500h43" stroke="#232b35" />
              <path d="M.5 0v43M0 .5h43" stroke="#29323d" />
            </pattern>
          </defs>
          <rect width="100%" height="100%" fill="url(#cells)" />
          <path d="M21.500 0v1000" stroke="#235a46" />
          <circle cx="415.500" cy="133" r="52.500" fill="none" stroke="#3d5a9e" stroke-width="2.600" />
          <circle cx="415.500" cy="133" r="52.500" fill="none" stroke="#a3b9e6" stroke-width="1.300" />
          <rect v-for="(g, i) in grips" :key="i" :x="g[0] - 4" :y="g[1] - 4" width="8" height="8" fill="#0b84f5" />
        </svg>
        <p class="view">[−][俯视][二维线框]</p>
        <div class="docbuttons">
          <button aria-label="最小化图形"><Icon name="min" :size="10" /></button>
          <button aria-label="还原图形"><Icon name="restore" :size="10" /></button>
          <button aria-label="关闭图形"><Icon name="close" :size="10" /></button>
        </div>
        <div class="compass">
          <span class="n">北</span><span class="w">西</span>
          <div class="ring"><button>上</button></div>
          <span class="e">东</span><span class="s">南</span>
        </div>
        <button class="wcs">WCS</button>
        <svg class="navbar" viewBox="0 0 24 162" width="24" height="162" role="img" aria-label="导航栏">
          <rect width="24" height="162" rx="2" fill="#555a60" />
          <g fill="none" stroke="#3b414a" stroke-width="1.200">
            <circle cx="19" cy="5" r="2" />
            <circle cx="12" cy="22" r="8" /><circle cx="12" cy="22" r="4" /><path d="M3 14v8M21 20v8" />
            <path d="M7 60c-4-5-5-7-3-7l3 3v-8c2-1 2 1 2 5v-6c2-1 2 1 2 5v-6c2-1 2 1 2 6l1-5c2 0 2 2 1 6l2-3c2 0 0 8-3 11z" />
            <path d="M3 70l13 13M16 70L3 83M3 74v-4h4M3 79v4h4" /><circle cx="17" cy="80" r="3" /><path d="M19 82l3 3" />
            <path d="M12 97v20M4 107h17M9 100l3-3 3 3M9 114l3 3 3-3" /><ellipse cx="12" cy="107" rx="8" ry="3" />
            <path d="M3 131h5v5H3zM10 131h5v5h-5zM17 131h4v5h-4zM3 138h11v9H3z" /><circle cx="18" cy="157" r="2" />
          </g>
          <path d="M10 36h4l-2 2zM10 91h4l-2 2zM10 121h4l-2 2zM7 140l4 3-4 3z" fill="#343a43" />
        </svg>
        <svg class="ucs" viewBox="0 0 60 60" width="60" height="60" aria-hidden="true">
          <path d="M9.500 10v37M13 50.500h36M6.500 47.500h7v7h-7z" fill="none" stroke="#c4c8cd" />
          <path d="M11 -1l4.500 5L20 -1M15.500 4v5M51 40l10 9M61 40l-10 9" fill="none" stroke="#b9bec5" />
        </svg>
        <div class="command">
          <i class="dots"></i>
          <button aria-label="关闭命令行"><Icon name="close" :size="10" /></button>
          <button aria-label="自定义"><Icon name="wrench" :size="13" /></button>
          <div class="entry"><Icon name="prompt" /><Icon class="dark" name="down" :size="6" /><input aria-label="命令" placeholder="键入命令"></div>
        </div>
      </div>
      <div class="edge"></div>
    </main>

    <footer class="status">
      <nav class="sheets">
        <button class="on">模型</button><button>布局1</button><button>布局2</button><button aria-label="新建布局"><Icon name="plus" :size="8" /></button>
      </nav>
      <div class="modes">
        <button class="on sliver" aria-label="模型空间"></button>
        <button class="split" aria-label="栅格"><Icon name="grid" /><Icon name="down" :size="6" /></button>
        <button aria-label="正交"><Icon name="ortho" /></button>
        <button class="on" aria-label="极轴追踪"><Icon name="polar" /></button>
        <button class="drop" aria-label="极轴设置"><Icon name="down" :size="6" /></button>
        <button class="split" aria-label="等轴测"><Icon name="iso" /><Icon name="down" :size="6" /></button>
        <button class="on" aria-label="对象捕捉"><Icon name="snap" /></button>
      </div>
      <div class="extras"><Icon name="screen" /><button aria-label="自定义状态栏"><Icon name="burger" /></button></div>
    </footer>

    <div class="taskbar">
      <button class="startkey" aria-label="开始"><Icon name="windows" /></button>
      <label class="cortana"><i></i><input aria-label="在这里输入你要搜索的内容" placeholder="在这里输入你要搜索的内容"><Icon name="mic" :size="15" /></label>
      <div class="apps">
        <button v-for="a in apps" :key="a.icon" :class="{ open: a.open, on: a.on }" :aria-label="a.label"><Icon :name="a.icon" :size="a.size ?? 19" /></button>
      </div>
      <div class="tray"><i class="dot"></i><time>2019/10/15</time><button aria-label="通知"><Icon name="note" :size="14" /><b>3</b></button></div>
    </div>

    <ul class="menu context" role="menu">
      <template v-for="(m, i) in contextMenu" :key="i">
        <li v-if="m.sep" class="sep" role="separator"></li>
        <li v-else :class="{ active: m.active }" role="none">
          <button role="menuitem"><span class="mi"><Icon v-if="m.icon" :name="m.icon" :size="13" /></span>{{ m.label }}<svg v-if="m.sub" class="arrow" viewBox="0 0 5 8" width="5" height="8" aria-hidden="true"><path d="M1 1l3 3-3 3" fill="none" stroke="#4b4f54" /></svg></button>
        </li>
      </template>
    </ul>
    <ul class="menu clip" role="menu">
      <li v-for="m in clipMenu" :key="m.label" :class="{ active: m.active }" role="none">
        <button role="menuitem" :disabled="m.off"><span class="mi"><Icon v-if="m.icon" :name="m.icon" :size="13" /></span>{{ m.label }}<kbd v-if="m.keys">{{ m.keys }}</kbd></button>
      </li>
    </ul>

    <div class="ime"><Icon name="person" :size="13" /><Icon name="apps" /></div>
    <a class="brand" href="#">
      <svg viewBox="0 0 56 48" width="56" height="48" aria-hidden="true">
        <path d="M26 9l12 6v20l-12 1z" fill="#c9cbd0" />
        <path d="M16 14l10-5v27l-10 1z" fill="#1e4da0" />
        <path d="M40 17l7 5v9l-7 4z" fill="#c9cbd0" />
        <path d="M32 22l8-5v18l-8 2z" fill="#1e4da0" />
        <path d="M5 27l7-3v13l-7-5z" fill="#1e4da0" />
        <path d="M4 21C12 0 40-6 52 7c5 6 4 13 0 19 2-7 1-12-4-16C37 0 15 6 4 21z" fill="#98bf2a" />
        <path d="M1 25c0 20 36 20 55-6-8 26-38 35-51 22-4-4-5-10-4-16z" fill="#16479c" />
      </svg>
      <span><strong>土木工程网</strong><em>www.civilcn.com</em></span>
    </a>
  </div>
</template>

<style>
html, body { margin: 0; background: #0d141b; }
</style>

<style scoped>
.app { position: relative; display: flex; flex-direction: column; height: 100vh; min-height: 563px; overflow: hidden; background: #232a35; color: #d9dce1; font: 10px/12px "Noto Sans", "Noto Sans CJK SC", sans-serif; }
.app * { box-sizing: border-box; }
button, input, select { margin: 0; padding: 0; border: 0; border-radius: 0; background: none; color: inherit; font: inherit; }
button { display: flex; align-items: center; justify-content: center; white-space: nowrap; }
input, select { min-width: 0; outline: 0; }
select { appearance: none; }
svg { display: block; flex: none; }
i { flex: none; }

.head { display: flex; align-items: start; height: 34px; flex: none; }
.logo { width: 30px; height: 30px; background: linear-gradient(#d4d4d4, #8d8d8d); }
.headmain { flex: 1; min-width: 0; }
.titlebar { display: flex; align-items: center; height: 18px; }
.quick { display: flex; align-items: center; gap: 4px; width: 267px; padding-left: 6px; }
.quick button { width: 15px; }
.title { display: flex; gap: 11px; width: 254px; color: #e4e7ea; }
.finder { display: flex; align-items: center; gap: 4px; }
.finder input { width: 138px; height: 15px; padding: 0 3px; background: #434d60; font-style: italic; }
.finder input::placeholder, .entry input::placeholder { color: #a4acb8; opacity: 1; }
.titlebar > button { margin-left: 4px; }
.titlebar .login { margin-left: 6px; gap: 4px; }
.services { display: flex; align-items: center; gap: 8px; margin-left: auto; }
.services i { width: 1px; height: 14px; background: #4a5361; }
.pair { gap: 4px; }
.wincontrols { display: flex; gap: 8px; margin-left: 50px; padding-right: 3px; }
.tabs { display: flex; align-items: end; height: 16px; padding-left: 6px; color: #b6bcc6; }
.tabs button { height: 14px; padding: 0 7px 1px; }
.tabs .on { background: #3b4453; color: #eceef1; }
.tabs .pair { padding: 0 16px; }

.ribbon { display: grid; grid-template-columns: 163fr 103fr 98fr 196fr 61fr 157fr 52fr 59fr 46fr 47fr; gap: 1px; flex: none; height: 76px; padding-right: 7px; background: #2a313d; }
.panel { display: grid; grid-template-rows: 1fr 15px; min-width: 0; background: #3b4453; }
.panel.lit { margin: 1px; background: #505b70; }
.body { display: flex; padding: 3px 2px 0 1px; min-width: 0; }
.body.solo { justify-content: center; padding: 3px 0 0; }
.big { flex-direction: column; justify-content: flex-start; width: 31px; height: 57px; line-height: 13px; }
.big svg:first-child { margin-bottom: 2px; }
.big.wide { width: 39px; }
.big.layer { width: 34px; }
.big.util { width: 37px; }
.name { width: 100%; height: 14px; gap: 5px; }
.foot { display: flex; align-items: center; padding-right: 3px; }
.foot .name { flex: 1; width: auto; }
.smalls { display: grid; grid-auto-rows: 19px; }
.smalls button { justify-content: flex-start; gap: 4px; padding-left: 4px; }
.one { flex: 1; padding-left: 5px; }
.wide ~ .one { padding-left: 1px; }
.one.block { padding-left: 0; }
.one.snug { padding-left: 1px; }
.snug button { padding: 0; width: 18px; justify-content: center; }
.snug .on { border: 1px solid #4aa3dc; background: #30485e; }
.four { grid-template-columns: 22px 22px 33px 22px; }
.five { grid-template-columns: repeat(5, 19px); }
.five button { padding-left: 1px; }
.layerside { flex: 1; min-width: 0; }
.combo { display: flex; align-items: center; flex: 1; height: 16px; padding: 0 2px 0 1px; gap: 2px; background: #4c576b; min-width: 0; }
.layerside .combo { margin: 1px 0 2px; padding-left: 1px; }
.combo select { flex: 1; padding-left: 5px; }
.swatch { width: 10px; height: 10px; margin-left: 3px; border: 1px solid #20252d; background: #fff; }
.swatch.large { width: 12px; height: 12px; margin: 0 1px 0 8px; border: 0; }
.rule { width: 51px; height: 1px; background: #dfe2e6; }
.rule + select { padding: 0; }
.props { display: grid; grid-template-columns: 14px 1fr; grid-auto-rows: 19px; column-gap: 2px; align-items: center; flex: 1; min-width: 0; padding-left: 2px; }

.files { display: flex; align-items: end; flex: none; height: 24px; padding-left: 12px; border-bottom: 3px solid #3b4453; }
.file { height: 18px; justify-content: flex-start; clip-path: polygon(6px 0, calc(100% - 6px) 0, 100% 100%, 0 100%); }
.start { width: 101px; padding-left: 11px; background: #2e3542; color: #aeb5c0; }
.current { width: 100px; gap: 19px; padding-left: 7px; background: #3b4453; }
.add { width: 20px; justify-content: center; background: #2e3542; }

.work { display: flex; flex: 1; min-height: 0; background: #090e14; }
.canvas { position: relative; flex: 1; overflow: hidden; border-bottom: 1px solid #4b525d; background: #212832; }
.edge { width: 5px; margin-right: 2px; background: linear-gradient(#8cc0df, #e2f3fb 40px, #a5d0e8 50px); }
.drawing { position: absolute; inset: 0; }
.view { position: absolute; left: 1px; top: 3px; margin: 0; }
.docbuttons { position: absolute; top: 5px; right: 6px; display: flex; gap: 6px; }
.compass { position: absolute; top: 25px; right: 8px; display: grid; grid-template-columns: 12px 48px 12px; grid-template-rows: 12px 48px 12px; place-items: center; color: #a0a5ab; }
.compass .n, .compass .s { grid-column: 2; }
.compass .w { grid-area: 2 / 1; } .compass .e { grid-area: 2 / 3; }
.ring { grid-area: 2 / 2; display: flex; align-items: center; justify-content: center; width: 64px; height: 64px; margin: -8px; border: 8px solid #464d56; border-radius: 50%; }
.ring button { width: 27px; height: 27px; background: #b9bcbd; color: #5c6570; font: 18px/26px "Liberation Serif", "Noto Sans CJK SC", serif; }
.compass span { position: relative; z-index: 1; }
.wcs { position: absolute; top: 107px; right: 26px; width: 37px; height: 13px; padding-left: 3px; justify-content: flex-start; border: 1px solid #8e949b; border-radius: 3px; background: #7a8087; color: #c7cacd; font: 8px/11px "Liberation Sans", sans-serif; }
.navbar { position: absolute; top: 139px; right: 2px; }
.ucs { position: absolute; left: 0; bottom: 0; height: 60px; overflow: visible; }
.command { position: absolute; left: 207px; right: 27px; bottom: 0; display: flex; align-items: center; height: 18px; background: #2b323d; }
.command button { width: 17px; }
.dots { width: 2px; height: 14px; background: repeating-linear-gradient(#7c828b 0 1px, transparent 1px 3px); }
.entry { display: flex; align-items: center; flex: 1; gap: 1px; height: 18px; margin-left: 2px; padding-left: 2px; background: #bfc0c0; }
.entry input { flex: 1; height: 18px; padding-left: 5px; color: #444; font-style: italic; }
.entry input::placeholder { color: #76797b; }
.dark { filter: brightness(.35); }

.status { display: flex; align-items: center; flex: none; height: 22px; background: #2b323d; }
.sheets { display: flex; align-self: start; padding-left: 9px; gap: 1px; width: 630px; }
.sheets button { width: 42px; height: 15px; background: #333b48; color: #b4bac4; clip-path: polygon(0 0, 100% 0, calc(100% - 5px) 100%, 5px 100%); }
.sheets button:first-child { width: 35px; }
.sheets .on { background: #485163; color: #fff; font-weight: 700; }
.sheets button:last-child { width: 24px; }
.modes { display: flex; gap: 1px; }
.modes button { width: 18px; height: 18px; background: #38414f; }
.modes .split { justify-content: flex-start; width: 32px; gap: 5px; padding-left: 2px; }
.modes .on { background: #557fb8; }
.modes .sliver { width: 3px; }
.modes .drop { width: 12px; }
.extras { display: flex; gap: 4px; margin-left: auto; padding-right: 2px; }

.taskbar { display: flex; align-items: stretch; flex: none; height: 32px; background: #03181c; }
.startkey { width: 38px; }
.cortana { display: flex; align-items: center; width: 268px; padding: 0 8px; gap: 6px; background: #f2f2f2; color: #333; font-size: 11px; line-height: 16px; }
.cortana i { width: 17px; height: 17px; border: 3px solid #16191b; border-radius: 50%; }
.cortana input { flex: 1; }
.cortana input::placeholder { color: #3a3d40; opacity: 1; }
.apps { display: flex; gap: 2px; }
.apps button { width: 37px; border-bottom: 2px solid transparent; }
.apps .open { border-color: #74b2e4; }
.apps .on { background: #3b5053; }
.tray { display: flex; align-items: end; margin-left: auto; padding-right: 8px; border-right: 1px solid #35474a; line-height: 16px; }
.tray button { position: relative; align-self: center; width: 26px; margin-left: 9px; }
.tray b { position: absolute; right: 0; top: 4px; width: 12px; height: 12px; border-radius: 50%; background: #303b3e; color: #fff; font-size: 9px; line-height: 12px; }
.dot { width: 12px; height: 12px; margin: 0 11px 6px 0; border-radius: 50%; background: #2396e8; }

.menu { position: absolute; display: flex; flex-direction: column; margin: 0; list-style: none; background: #f1f1f1; border: 1px solid #c9cbcd; color: #24272a; }
.menu li { flex: 1; display: flex; min-height: 0; }
.menu button { flex: 1; justify-content: flex-start; }
.menu button:disabled { color: #909396; }
.menu .active { background: #91c9f3; }
.menu .sep { flex: none; height: 4px; margin: 0 2px 0 21px; background: linear-gradient(#dcddde, #dcddde) center / 100% 1px no-repeat; }
.mi { flex: none; display: flex; justify-content: center; width: 15px; margin-right: 5px; }
.context { left: 494px; top: 190px; width: 137px; height: 342px; padding: 0 1px 1px; }
.arrow { margin: 0 6px 0 auto; }
.clip { left: 628px; top: 226px; width: 172px; height: 97px; padding: 0 0 2px; }
kbd { margin: 0 13px 0 auto; font: inherit; }

.ime { position: absolute; right: 2px; bottom: 44px; display: flex; align-items: center; gap: 6px; height: 23px; padding: 0 4px; background: #f6f8fa; }
.brand { position: absolute; right: 35px; bottom: 10px; display: flex; align-items: center; width: 211px; height: 106px; padding-left: 19px; background: #fff; color: #0c0c0c; text-decoration: none; }
.brand span { display: flex; flex-direction: column; }
.brand strong { font: italic 900 23px/24px "Noto Sans CJK SC", sans-serif; }
.brand em { font: italic 500 15px/15px "Noto Sans", sans-serif; }
</style>
